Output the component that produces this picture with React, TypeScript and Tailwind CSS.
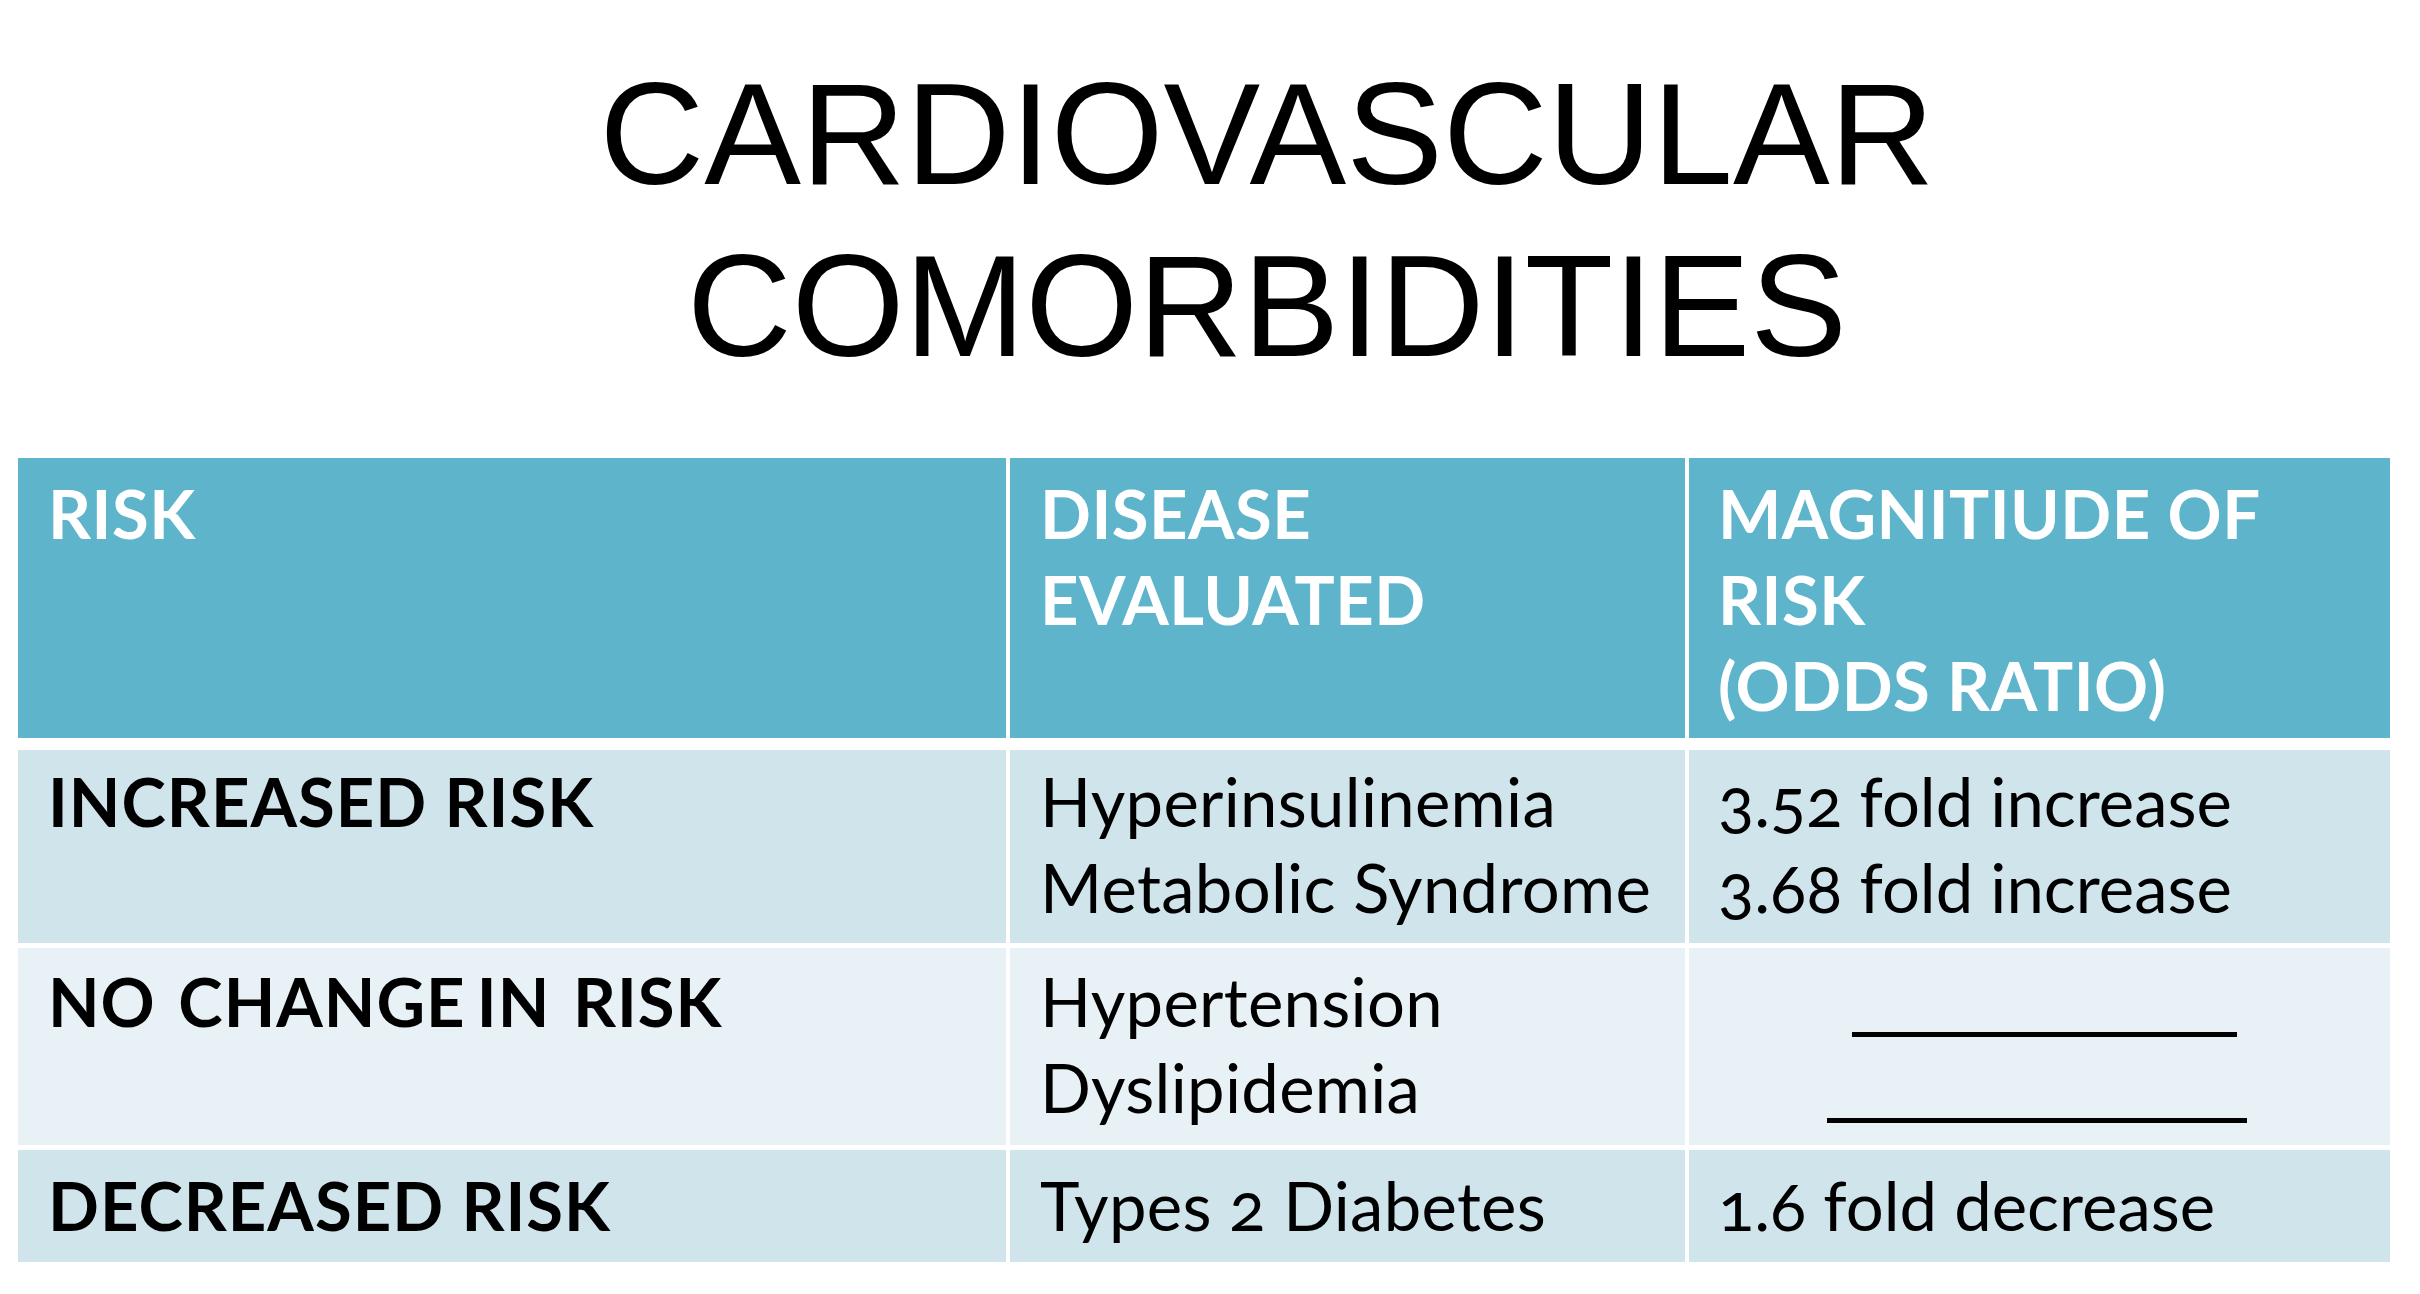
import * as React from "react";

const rows = [
  {
    risk: "INCREASED RISK",
    diseases: ["Hyperinsulinemia", "Metabolic Syndrome"],
    magnitude: ["3.52 fold increase", "3.68 fold increase"],
    bg: "bg-[#d0e4ec]",
    height: "h-[193px]",
    pad: "pt-[8px]",
    spacing: "",
  },
  {
    risk: "NO\u00a0 CHANGE IN\u00a0 RISK",
    diseases: ["Hypertension", "Dyslipidemia"],
    magnitude: [],
    bg: "bg-[#e8f1f5]",
    height: "h-[197px]",
    pad: "pt-[10px]",
    spacing: "[word-spacing:-6px]",
  },
  {
    risk: "DECREASED RISK",
    diseases: ["Types 2 Diabetes"],
    magnitude: ["1.6 fold decrease"],
    bg: "bg-[#d0e4ec]",
    height: "h-[112px]",
    pad: "pt-[12px]",
    spacing: "",
  },
];

// the two blank rules in the "no change" row
const Blank = ({ offset, width }: { offset: string; width: string }) => (
  <div className={`h-[86px] flex items-start pt-[74px] ${offset}`}>
    <div className={`h-[5px] bg-black ${width}`} />
  </div>
);

const App = () => {
  return (
    <div className="w-[2420px] h-[1294px] bg-white overflow-hidden">
      {/* title */}
      <div className="pt-[48px] pl-[114px] text-center font-['Liberation_Sans',Arial,sans-serif] text-[145px] leading-[172px] text-black">
        <div>CARDIOVASCULAR</div>
        <div>COMORBIDITIES</div>
      </div>

      {/* table */}
      <div className="mt-[66px] ml-[18px] w-[2372px] flex flex-col font-['Lato',sans-serif] text-[67px] leading-[86px] [font-feature-settings:'onum']">
        <div className="grid grid-cols-[988px_675px_701px] gap-x-[4px] h-[280px] text-white font-bold tracking-[0.5px]">
          <div className="bg-[#5eb4cb] px-[30px] pt-[12px]">RISK</div>
          <div className="bg-[#5eb4cb] px-[30px] pt-[12px]">
            DISEASE
            <br />
            EVALUATED
          </div>
          <div className="bg-[#5eb4cb] px-[29px] pt-[12px]">
            MAGNITIUDE OF
            <br />
            RISK
            <br />
            (ODDS RATIO)
          </div>
        </div>

        <div className="mt-[12px] flex flex-col gap-[5px] text-black">
          {rows.map((r) => (
            <div
              key={r.risk}
              className={`grid grid-cols-[988px_675px_701px] gap-x-[4px] ${r.height}`}
            >
              <div className={`${r.bg} px-[30px] ${r.pad} font-bold tracking-[1px] whitespace-pre ${r.spacing}`}>
                {r.risk}
              </div>
              <div className={`${r.bg} px-[30px] ${r.pad} whitespace-nowrap tracking-[0.3px]`}>
                {r.diseases.map((d) => (
                  <div key={d}>{d}</div>
                ))}
              </div>
              <div className={`${r.bg} px-[29px] ${r.pad} whitespace-nowrap`}>
                {r.magnitude.length > 0 ? (
                  r.magnitude.map((m) => <div key={m}>{m}</div>)
                ) : (
                  <>
                    <Blank offset="pl-[134px]" width="w-[385px]" />
                    <Blank offset="pl-[109px]" width="w-[420px]" />
                  </>
                )}
              </div>
            </div>
          ))}
        </div>
      </div>
    </div>
  );
};

export default App;
